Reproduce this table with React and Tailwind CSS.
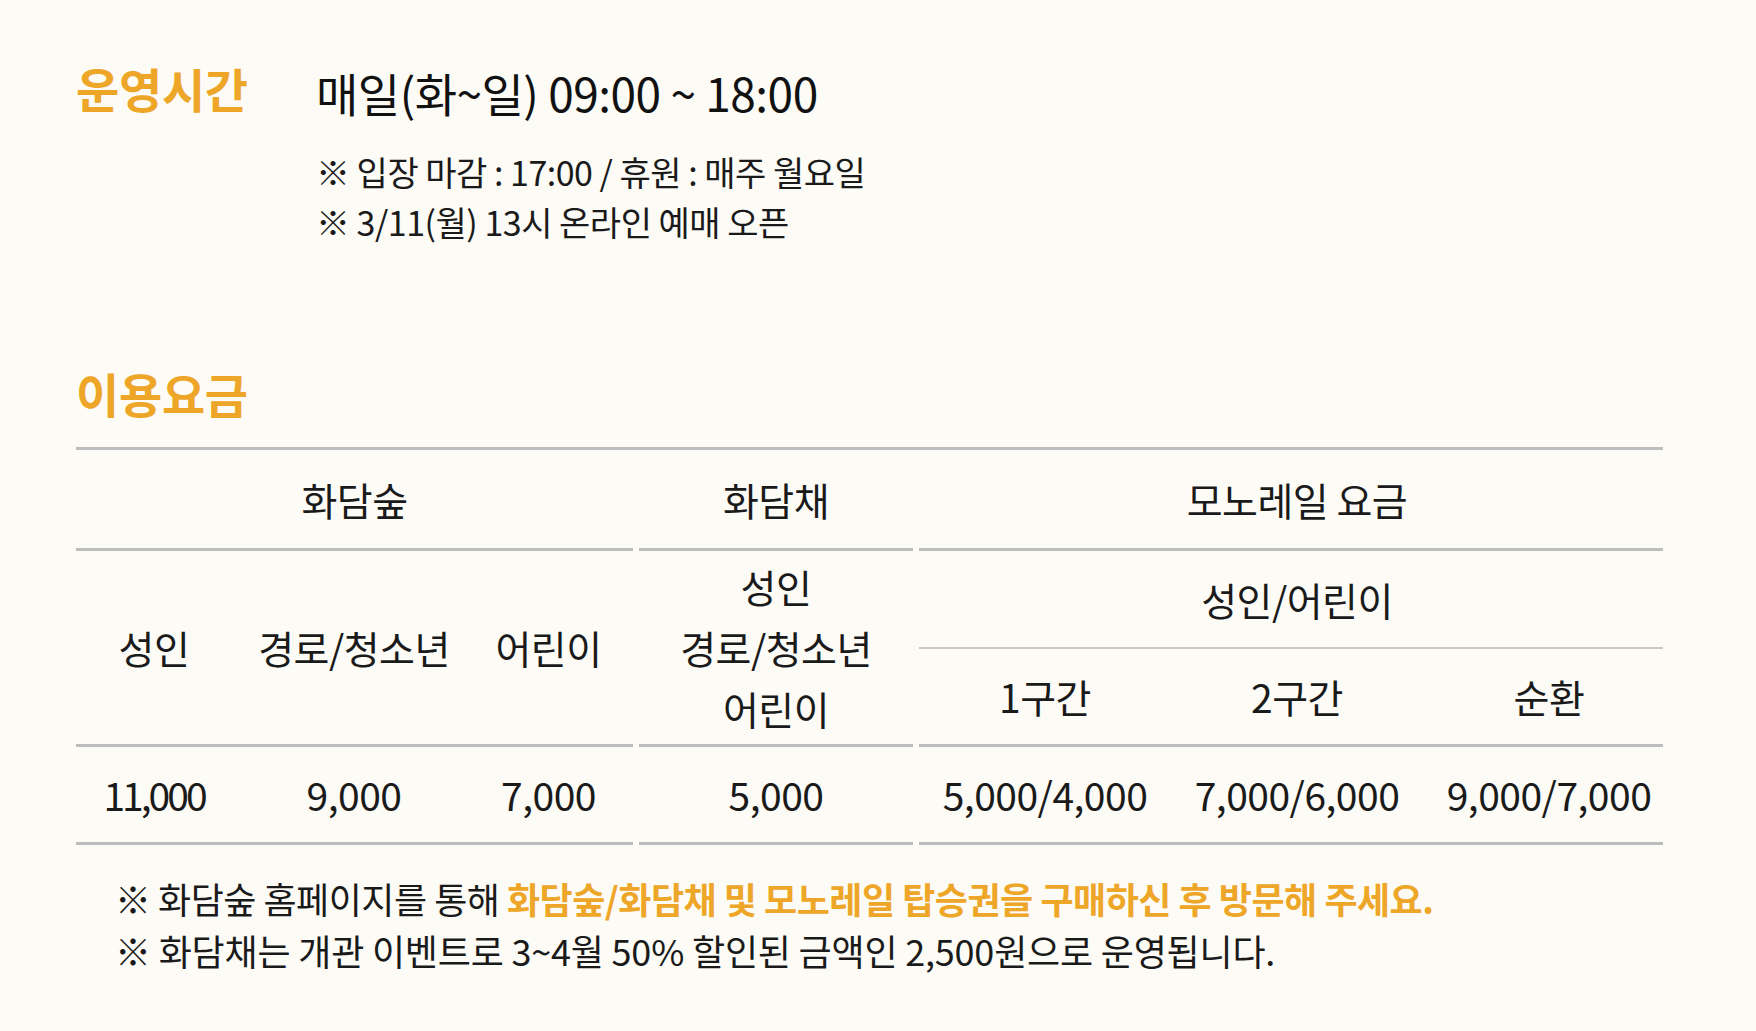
import React from 'react';

const font = { fontFamily: '"Noto Sans CJK KR", "Noto Sans", sans-serif' };

// 표 안의 셀
function Cell({ children, className = '' }) {
  return (
    <div className={`flex items-center justify-center text-center ${className}`}>
      {children}
    </div>
  );
}

function Hours() {
  return (
    <div className="flex pt-[62px]">
      <h2 className="w-[240px] text-[47px] leading-[52px] font-bold tracking-[-0.3px] text-[#eea628]">
        운영시간
      </h2>
      <div>
        <p className="text-[46px] leading-[60px] tracking-[-0.5px] text-[#111]">
          매일(화~일) 09:00 ~ 18:00
        </p>
        <div className="mt-[25px] text-[34px] leading-[50px] tracking-[-0.5px] text-[#1a1a1a]">
          <p>※ 입장 마감 : 17:00 / 휴원 : 매주 월요일</p>
          <p>※ 3/11(월) 13시 온라인 예매 오픈</p>
        </div>
      </div>
    </div>
  );
}

function PriceTable() {
  const line = 'border-b-[3px] border-[#bdbdbd]';
  return (
    <div className="w-[1587px] border-t-[3px] border-[#bdbdbd] text-[39px] tracking-[-0.5px] text-[#1a1a1a]">
      <div className="flex gap-[6px]">
        {/* 화담숲 */}
        <div className="w-[557px]">
          <Cell className={`h-[101px] ${line}`}>화담숲</Cell>
          <div className={`grid grid-cols-[156px_244px_157px] h-[196px] ${line}`}>
            <Cell>성인</Cell>
            <Cell>경로/청소년</Cell>
            <Cell className="pr-[12px]">어린이</Cell>
          </div>
          <div className={`grid grid-cols-[156px_244px_157px] h-[98px] ${line}`}>
            <Cell className="tracking-[-3px]">11,000</Cell>
            <Cell>9,000</Cell>
            <Cell className="pr-[12px]">7,000</Cell>
          </div>
        </div>

        {/* 화담채 */}
        <div className="w-[274px]">
          <Cell className={`h-[101px] ${line}`}>화담채</Cell>
          <Cell className={`h-[196px] ${line}`}>
            <div className="leading-[61px]">
              <p>성인</p>
              <p>경로/청소년</p>
              <p>어린이</p>
            </div>
          </Cell>
          <Cell className={`h-[98px] ${line}`}>5,000</Cell>
        </div>

        {/* 모노레일 */}
        <div className="w-[744px]">
          <div className={`h-[101px] ${line}`}>
            <Cell className="w-[756px] h-full">모노레일 요금</Cell>
          </div>
          <div className={`h-[196px] ${line}`}>
            <div className="h-[98px] border-b-[2px] border-[#c9c9c9]">
              <Cell className="w-[756px] h-full">성인/어린이</Cell>
            </div>
            <div className="grid grid-cols-[252px_252px_252px] h-[95px]">
              <Cell>1구간</Cell>
              <Cell>2구간</Cell>
              <Cell>순환</Cell>
            </div>
          </div>
          <div className={`h-[98px] ${line}`}>
            <div className="grid grid-cols-[252px_252px_252px] h-full">
              <Cell>5,000/4,000</Cell>
              <Cell>7,000/6,000</Cell>
              <Cell>9,000/7,000</Cell>
            </div>
          </div>
        </div>
      </div>
    </div>
  );
}

export default function App() {
  return (
    <div className="min-h-[1031px] bg-[#fcfbf6] pl-[76px]" style={font}>
      <Hours />

      <h2 className="mt-[120px] mb-[28px] text-[47px] leading-[52px] font-bold tracking-[-0.3px] text-[#eea628]">
        이용요금
      </h2>

      <PriceTable />

      <div className="mt-[27px] pl-[39px] text-[36px] leading-[52px] tracking-[-0.5px] text-[#1a1a1a]">
        <p>
          ※ 화담숲 홈페이지를 통해{' '}
          <span className="font-bold text-[#eea628]">
            화담숲/화담채 및 모노레일 탑승권을 구매하신 후 방문해 주세요.
          </span>
        </p>
        <p className="tracking-[-0.2px]">
          ※ 화담채는 개관 이벤트로 3~4월 50% 할인된 금액인 2,500원으로 운영됩니다.
        </p>
      </div>
    </div>
  );
}
